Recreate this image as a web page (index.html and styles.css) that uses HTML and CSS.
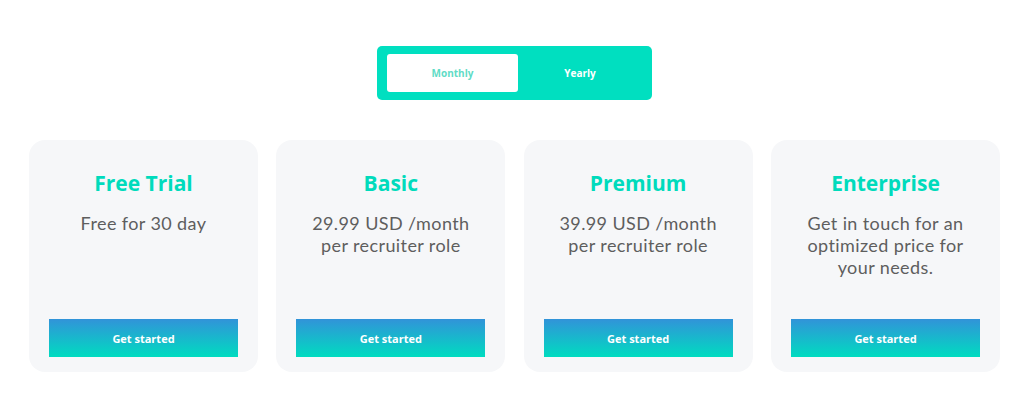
FILE: index.html
```html
<!DOCTYPE html>
<html>
<head>
<meta charset="utf-8">
<link rel="stylesheet" href="styles.css">
</head>
<body>
<div class="page">
  <div class="toggle">
    <button class="tab tab-active">Monthly</button>
    <button class="tab">Yearly</button>
  </div>
  <div class="plans">
    <div class="card">
      <h2 class="title">Free Trial</h2>
      <p class="desc">Free for 30 day</p>
      <a class="cta">Get started</a>
    </div>
    <div class="card">
      <h2 class="title">Basic</h2>
      <p class="desc">29.99 USD /month<br>per recruiter role</p>
      <a class="cta">Get started</a>
    </div>
    <div class="card">
      <h2 class="title">Premium</h2>
      <p class="desc">39.99 USD /month<br>per recruiter role</p>
      <a class="cta">Get started</a>
    </div>
    <div class="card">
      <h2 class="title">Enterprise</h2>
      <p class="desc">Get in touch for an<br>optimized price for<br>your needs.</p>
      <a class="cta">Get started</a>
    </div>
  </div>
</div>
</body>
</html>
```
FILE: styles.css
```css
* { box-sizing: border-box; }
html, body { margin: 0; padding: 0; background: #ffffff; }
body { font-family: "Open Sans", "Lato", sans-serif; }
.page {
  width: 1029px;
  padding-top: 46px;
  display: flex;
  flex-direction: column;
  align-items: center;
}
.toggle {
  width: 275px;
  height: 54px;
  padding: 8px 10px;
  background: #00dfc0;
  border-radius: 5px;
  display: flex;
}
.tab {
  border: 0;
  background: transparent;
  font-family: "Open Sans", sans-serif;
  font-size: 10px;
  font-weight: 700;
  color: #ffffff;
  border-radius: 3px;
  padding: 0;
  width: 124px;
}
.tab-active {
  width: 131px;
  background: #ffffff;
  color: #5fdcc6;
}
.plans {
  margin-top: 40px;
  width: 971px;
  display: grid;
  grid-template-columns: repeat(4, 1fr);
  column-gap: 18.33px;
}
.card {
  height: 232px;
  background: #f6f7f9;
  border-radius: 16px;
  padding: 29px 20px 15px;
  display: flex;
  flex-direction: column;
  align-items: stretch;
  text-align: center;
}
.title {
  margin: 0;
  font-size: 21px;
  font-weight: 700;
  line-height: 28px;
  color: #00dbbc;
}
.desc {
  margin: 15px 0 0;
  font-family: "Lato", "Open Sans", sans-serif;
  font-size: 18px;
  line-height: 22px;
  letter-spacing: 0.4px;
  color: #5e5e5e;
  flex: 1;
}
.cta {
  display: flex;
  align-items: center;
  justify-content: center;
  height: 38px;
  background: linear-gradient(180deg, #3193d9 0%, #00dcc0 100%);
  color: #ffffff;
  font-size: 11px;
  font-weight: 700;
}
```
